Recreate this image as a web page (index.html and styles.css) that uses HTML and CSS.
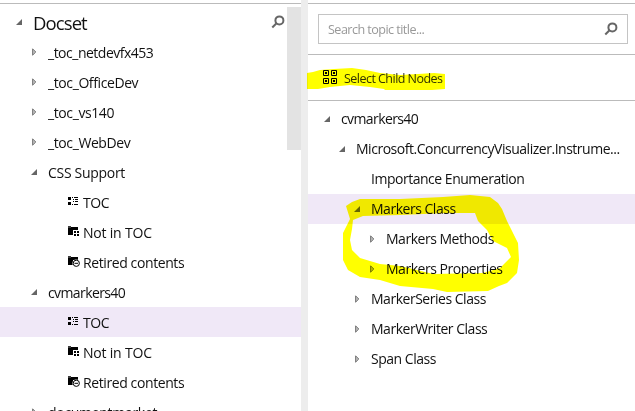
FILE: index.html
```
<!DOCTYPE html>
<html lang="en">
<head>
<meta charset="utf-8">
<title>Docset</title>
<link rel="stylesheet" href="styles.css">
</head>
<body>
<svg class="defs" width="0" height="0">
  <symbol id="open" viewBox="0 0 6 6"><path d="M6 0V6H0Z" fill="#666"/></symbol>
  <symbol id="shut" viewBox="0 0 5 8" preserveAspectRatio="xMaxYMid meet"><path d="M.6 .8V7.2L3.8 4Z" fill="#bbb" stroke="#777" stroke-width="1"/></symbol>
  <symbol id="find" viewBox="0 0 14 14"><circle cx="8.4" cy="5.4" r="4" fill="none" stroke="#666" stroke-width="2"/><path d="M5.5 8.3L1.3 12.5" stroke="#666" stroke-width="2"/></symbol>
  <symbol id="toc" viewBox="0 0 12 12"><path d="M0 1h3v3H0zM0 6h3v3H0zM4 1h1v1H4zM6 1h4v1H6zM5 3h1v1H5zM7 3h3v1H7zM5 5h1v1H5zM7 5h3v1H7zM4 8h1v1H4zM6 8h4v1H6z"/></symbol>
  <symbol id="not" viewBox="0 0 12 12"><path d="M0 0h3v1h7v3H5v5H0zM6 5h2v2H6zM9 5h2v2H9zM6 8h2v2H6zM9 8h2v2H9z"/><path d="M0 1h3" stroke="#fff" stroke-width=".5"/></symbol>
  <symbol id="retired" viewBox="0 0 12 12"><path d="M0 0h3v1h7v3H5v5H0z"/><circle cx="8.3" cy="7.3" r="3.9" fill="#fff"/><circle cx="8.3" cy="7.3" r="3.1" fill="#fff" stroke="#000"/><path d="M6.5 7.3h3.6" stroke="#000"/><path d="M0 1h3" stroke="#fff" stroke-width=".5"/></symbol>
</svg>
<div class="app">
  <section class="docset">
    <header class="title"><svg class="arrow"><use href="#open"/></svg><h1>Docset</h1><svg class="find"><use href="#find"/></svg></header>
    <ul class="tree">
      <li class="row l1"><svg class="arrow"><use href="#shut"/></svg><span class="tight">_toc_netdevfx453</span></li>
      <li class="row l1"><svg class="arrow"><use href="#shut"/></svg><span class="snug">_toc_OfficeDev</span></li>
      <li class="row l1"><svg class="arrow"><use href="#shut"/></svg><span class="snug">_toc_vs140</span></li>
      <li class="row l1"><svg class="arrow"><use href="#shut"/></svg><span class="snug">_toc_WebDev</span></li>
      <li class="row l1"><svg class="arrow"><use href="#open"/></svg><span>CSS Support</span></li>
      <li class="row leaf"><svg class="icon"><use href="#toc"/></svg><span class="snug">TOC</span></li>
      <li class="row leaf"><svg class="icon"><use href="#not"/></svg><span class="loose">Not in TOC</span></li>
      <li class="row leaf"><svg class="icon"><use href="#retired"/></svg><span class="snug">Retired contents</span></li>
      <li class="row l1"><svg class="arrow"><use href="#open"/></svg><span class="narrow">cvmarkers40</span></li>
      <li class="row leaf selected"><svg class="icon"><use href="#toc"/></svg><span class="snug">TOC</span></li>
      <li class="row leaf"><svg class="icon"><use href="#not"/></svg><span class="loose">Not in TOC</span></li>
      <li class="row leaf"><svg class="icon"><use href="#retired"/></svg><span class="snug">Retired contents</span></li>
      <li class="row l1"><svg class="arrow"><use href="#shut"/></svg><span>documentmarket</span></li>
    </ul>
    <div class="scrollbar"></div>
  </section>
  <div class="splitter"></div>
  <section class="topics">
    <div class="searchbar"><div class="search"><span>Search topic title...</span><svg class="find"><use href="#find"/></svg></div></div>
    <div class="toolbar">
      <svg width="14" height="14" viewBox="0 0 14 14"><path d="M.5 .5h5v5h-5zM8.5 .5h5v5h-5zM.5 8.5h5v5h-5zM8.5 8.5h5v5h-5z" fill="none" stroke="#000"/><path d="M2 2h2v2H2zM10 2h2v2h-2zM2 10h2v2H2zM10 10h2v2h-2z"/></svg>
      <span>Select Child Nodes</span>
    </div>
    <ul class="tree">
      <li class="row r0"><svg class="arrow"><use href="#open"/></svg><span class="narrow">cvmarkers40</span></li>
      <li class="row r1"><svg class="arrow"><use href="#open"/></svg><span>Microsoft.ConcurrencyVisualizer.Instrume...</span></li>
      <li class="row r2"><i class="arrow"></i><span>Importance Enumeration</span></li>
      <li class="row r2 selected"><svg class="arrow"><use href="#open"/></svg><span>Markers Class</span></li>
      <li class="row r3"><svg class="arrow"><use href="#shut"/></svg><span>Markers Methods</span></li>
      <li class="row r3"><svg class="arrow"><use href="#shut"/></svg><span>Markers Properties</span></li>
      <li class="row r2"><svg class="arrow"><use href="#shut"/></svg><span>MarkerSeries Class</span></li>
      <li class="row r2"><svg class="arrow"><use href="#shut"/></svg><span>MarkerWriter Class</span></li>
      <li class="row r2"><svg class="arrow"><use href="#shut"/></svg><span>Span Class</span></li>
    </ul>
  </section>
  <svg class="marker" viewBox="0 0 635 411"><path d="M307 73L313 72 320 70 334 69 352 68 366 70 380 73 400 75 418 74 434 73 445 74V89L432 90H385L384 89 370 87 350 85 330 87 318 89H307Z"/><path fill-rule="evenodd" d="M346 206L352 202 360 199 400 199 443 197 470 195 490 197 498 203 502 209 507 221 512 231 518 243 519 260 517 273 507 283 499 286 488 291 447 292 433 289 400 286 380 280 360 277 348 270 343 260V233L350 219ZM353 220L363 216 400 215 447 213H475L478 221 487 230 493 241 507 248 511 257 500 268 483 273 433 274 417 270 400 266 380 264 360 258 352 250 350 240 352 229Z"/></svg>
</div>
</body>
</html>
```
FILE: styles.css
```
* { box-sizing: border-box; }
body { margin: 0; background: #fff; color: #111; font: 14px/30px "Open Sans", "Noto Sans", sans-serif; overflow: hidden; }
.defs { position: absolute; }
.app { position: relative; display: flex; width: 635px; height: 411px; overflow: hidden; }
.docset { position: relative; width: 301px; padding-top: 3px; overflow: hidden; }
.title { display: flex; align-items: center; height: 34px; padding: 4px 16px 0 16px; border-top: 1px solid #bbb; }
h1 { flex: 1; margin: 0 0 0 11px; font-size: 18.5px; font-weight: 400; line-height: 30px; letter-spacing: -.9px; }
.arrow { flex: none; width: 6px; height: 6px; }
.find { flex: none; width: 14px; height: 14px; }
.title .arrow { margin-bottom: 1px; }
.title .find { margin-bottom: 1px; }
.scrollbar { position: absolute; top: 7px; right: 0; width: 14px; height: 143px; background: #e3e3e3; }
.tree { list-style: none; margin: 0; padding: 0; }
.row { display: flex; align-items: center; height: 30px; white-space: nowrap; }
.docset .row span { padding-top: 2px; letter-spacing: -.3px; }
.topics .row span { letter-spacing: -.48px; }
.docset .row .snug { letter-spacing: -.4px; }
.docset .row .tight { letter-spacing: -.5px; }
.docset .row .loose { letter-spacing: -.2px; }
.docset .row .narrow, .topics .row .narrow { letter-spacing: -.6px; }
.row .arrow { width: 6px; height: 8px; margin: 0 11px 0 0; }
.l1 { padding-left: 31px; }
.leaf { padding-left: 68px; }
.icon { width: 12px; height: 12px; margin-right: 3px; }
.r0 { padding-left: 16px; }
.r1 { padding-left: 31px; }
.r2 { padding-left: 46px; }
.r3 { padding-left: 61px; }
.selected { background: #f0e8f7; }
.splitter { width: 7px; background: #ededed; }
.topics { flex: 1; min-width: 0; padding-top: 3px; }
.searchbar { height: 52px; padding: 10px 7px 10px 10px; border: solid #bbb; border-width: 1px 0; }
.search { display: flex; align-items: center; justify-content: space-between; height: 30px; padding: 0 9px 0 9px; border: 1px solid #c4c4c4; color: #999; font-size: 12.6px; letter-spacing: -.55px; }
.search span { padding-top: 2px; }
.toolbar { display: flex; align-items: center; gap: 7px; height: 46px; padding-left: 15px; border-bottom: 1px solid #bbb; color: #333; font-size: 12.5px; letter-spacing: -.53px; }
.toolbar svg { margin-bottom: 1px; }
.toolbar span { padding-top: 2px; }
.topics .tree { padding-top: 3px; }
.marker { position: absolute; left: 0; top: 0; width: 635px; height: 411px; fill: #ff0; mix-blend-mode: multiply; pointer-events: none; }
```
